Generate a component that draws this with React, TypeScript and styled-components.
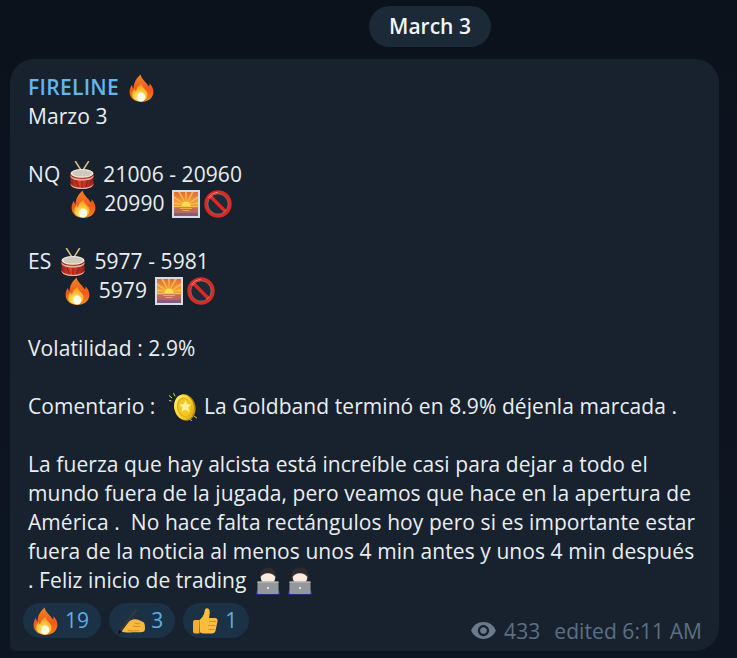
import React from "react";
import styled, { createGlobalStyle } from "styled-components";

const Global = createGlobalStyle`
  html, body { margin: 0; padding: 0; background: #0c131e; }
  body { width: 737px; height: 658px; overflow: hidden; font-family: "Open Sans", "Noto Sans", sans-serif; }
`;

const Page = styled.div`
  width: 737px;
  height: 658px;
  padding-top: 6px;
  box-sizing: border-box;
  background: linear-gradient(180deg, #0c121c 0%, #0d1522 100%);
  display: flex;
  flex-direction: column;
`;

const DatePill = styled.div`
  align-self: flex-start;
  margin-left: 369px;
  height: 41px;
  width: 122px;
  padding-bottom: 1px;
  box-sizing: border-box;
  border-radius: 21px;
  background: #1c2936;
  color: #f2f5f8;
  font-size: 21px;
  font-weight: 600;
  display: flex;
  align-items: center;
  justify-content: center;
`;

const Bubble = styled.div`
  align-self: flex-start;
  margin: 12px 0 0 10px;
  width: 709px;
  box-sizing: border-box;
  padding: 14px 17px 13px 18px;
  background: #18222e;
  border-radius: 24px 24px 24px 6px;
  color: #e9eef3;
  font-size: 21px;
  line-height: 29px;
  letter-spacing: 0.07px;
`;

const Message = styled.div`
  white-space: pre-wrap;
  padding-right: 2px;
`;

const Sender = styled.span`
  color: #62b6ee;
  font-weight: 600;
  letter-spacing: 0.3px;
`;

const Line = styled.div`
  min-height: 29px;
`;

const Glyph = styled.svg`
  display: inline-block;
  width: 28px;
  height: 28px;
  margin: 0 2px;
  vertical-align: -7px;
`;

const Footer = styled.div`
  display: flex;
  justify-content: space-between;
  align-items: flex-end;
  margin-top: 8px;
`;

const Reactions = styled.div`
  display: flex;
  gap: 8px;
  margin-left: -5px;
`;

const Reaction = styled.div`
  height: 35px;
  box-sizing: border-box;
  padding: 0 12px 0 8px;
  border-radius: 18px;
  background: #1b3145;
  color: #5eaee8;
  display: flex;
  align-items: center;
  gap: 6px;
  font-size: 21px;
  line-height: 35px;
  svg { width: 28px; height: 28px; display: block; }
`;

const Meta = styled.div`
  display: flex;
  align-items: center;
  color: #5d6f82;
  font-size: 21px;
  line-height: 26px;
  margin-bottom: -6px;
`;

const EyeIcon = styled.svg`
  width: 27px;
  height: 27px;
  margin-right: 7px;
  fill: #6b7b8c;
`;

const Edited = styled.span`
  margin-left: 14px;
`;

const Fire = () => (
  <>
    <defs>
      <linearGradient id="fireOuter" x1="0" y1="0" x2="0" y2="1">
        <stop offset="0" stopColor="#f4861f" />
        <stop offset="0.55" stopColor="#ee5a1d" />
        <stop offset="1" stopColor="#f08a1d" />
      </linearGradient>
      <radialGradient id="fireInner" cx="0.5" cy="0.8" r="0.7">
        <stop offset="0" stopColor="#fff8d8" />
        <stop offset="0.35" stopColor="#ffe05a" />
        <stop offset="1" stopColor="#f99a1c" />
      </radialGradient>
    </defs>
    <path d="M13.500.5C14.500 5 19 8 22 12.500c.6-1 .8-2 .6-3.200C25.500 12.500 27 16 26.300 19.600 25.300 24.800 20.500 28 14.500 28 8 28 3 24.500 2.600 18.600 2.400 15.800 3.400 13 5 10.800c.1 1.600.6 2.800 1.600 3.600C6.500 9 9.500 4 13.500.5Z" fill="url(#fireOuter)" />
    <path d="M14.500 10c.4 3 3.400 4.600 5.200 7.600 1.900 3.300.4 8.900-5.200 9.700-5.300.3-9-2.300-9.300-6.300-.2-2.400 1-4.500 2.600-5.900.1 1.200.5 2.100 1.300 2.700C9 14.500 11.500 11.800 14.500 10Z" fill="url(#fireInner)" />
    <ellipse cx="14.200" cy="23" rx="4" ry="4.500" fill="#fffbe6" />
  </>
);

const Drum = () => (
  <>
    <defs>
      <linearGradient id="drumBody" x1="0" y1="0" x2="1" y2="0">
        <stop offset="0" stopColor="#9c2116" />
        <stop offset="0.4" stopColor="#d9402d" />
        <stop offset="1" stopColor="#98201a" />
      </linearGradient>
    </defs>
    <path d="M7.500.5l7 11M20.500.5L13.500 11.500" stroke="#dcbb80" strokeWidth="1.500" strokeLinecap="round" />
    <path d="M2.500 12v11C2.500 26 8 28 14 28s11.500-2 11.500-5V12Z" fill="url(#drumBody)" />
    <path d="M2.500 22C2.500 25 8 26.800 14 26.800s11.500-1.800 11.500-4.800v1C25.500 26 20 28 14 28S2.500 26 2.500 23Z" fill="#e6b4a0" />
    <path d="M2.500 13.500C2.500 16.500 8 18 14 18s11.500-1.500 11.500-4.500v1.800C25.500 18 20 19.600 14 19.600S2.500 18 2.500 15.300Z" fill="#e6b4a0" />
    <ellipse cx="14" cy="12.300" rx="11.500" ry="4.400" fill="#f0ebe3" />
    <ellipse cx="14" cy="12.300" rx="9.800" ry="3.300" fill="#cfc8bc" />
    <path d="M8 19.500l2.500 6.500M14 20v7M20 19.500l-2.500 6.500" stroke="#7d150e" strokeWidth=".8" />
  </>
);

const Sunrise = () => (
  <>
    <defs>
      <linearGradient id="sunSky" x1="0" y1="0" x2="0" y2="1">
        <stop offset="0" stopColor="#df6a3e" />
        <stop offset="0.5" stopColor="#f9a834" />
        <stop offset="0.62" stopColor="#e98545" />
        <stop offset="1" stopColor="#7b5a8c" />
      </linearGradient>
    </defs>
    <rect width="28" height="28" fill="#d7dde3" />
    <rect x="2" y="2" width="24" height="24" fill="url(#sunSky)" />
    <path d="M14 15L6 2h2.500L14 14.500 13 2h2l-1 12.500L19.500 2H22ZM14 15L2 6v2.500L14 15 2 12.500V14ZM14 15 26 6v2.500L14 15l12-2.500V14Z" fill="#fbd24e" opacity=".7" />
    <path d="M9.500 16a4.500 4.500 0 0 1 9 0Z" fill="#ffe14e" />
    <rect x="2" y="16" width="24" height="10" fill="#b76a5c" opacity=".75" />
    <rect x="2" y="16" width="24" height="1.200" fill="#f9c24a" />
    <path d="M8 18.500h12M10.500 20.500h7" stroke="#f2a94d" strokeWidth="1" />
    <rect x="2" y="23" width="24" height="3" fill="#6d5590" opacity=".6" />
  </>
);

const NoEntry = () => (
  <>
    <circle cx="14" cy="14" r="12" fill="#1e2a36" stroke="#d92a24" strokeWidth="3.400" />
    <path d="M5.800 5.800l16.400 16.400" stroke="#d92a24" strokeWidth="3.400" />
    <circle cx="14" cy="14" r="10.100" fill="none" stroke="#e8e4e2" strokeWidth=".7" opacity=".45" />
    <path d="M4.500 8A11.500 11.500 0 0 1 14 2.500" stroke="#f57f72" strokeWidth="1" fill="none" />
  </>
);

const Coin = () => (
  <>
    <defs>
      <linearGradient id="coinFace" x1="0" y1="0" x2="1" y2="1">
        <stop offset="0" stopColor="#fff27e" />
        <stop offset="0.6" stopColor="#f6d024" />
        <stop offset="1" stopColor="#c99a12" />
      </linearGradient>
    </defs>
    <path d="M0 2.500l3 2.400M4.500.2l1.500 3M-.5 7.500l3 .5M25 23l3 2.200M21 25.500l1.500 2.500" stroke="#d6d65a" strokeWidth="1" />
    <ellipse cx="16" cy="14.500" rx="10.500" ry="13.300" transform="rotate(-12 16 14.500)" fill="#b9860e" />
    <ellipse cx="15" cy="14.300" rx="9.800" ry="12.800" transform="rotate(-12 15 14.300)" fill="url(#coinFace)" />
    <ellipse cx="15.300" cy="14.300" rx="7.300" ry="9.800" transform="rotate(-12 15.300 14.300)" fill="#d9a912" />
    <ellipse cx="15.600" cy="14.500" rx="6.500" ry="9" transform="rotate(-12 15.600 14.500)" fill="#f2c91e" />
    <path d="M16.500 7l1.700 4.300 4.200.2-3.300 3 1.200 4.500-3.900-2.500-4.100 2.400 1.300-4.500-3.300-3 4.500-.2Z" fill="#fff3a0" />
  </>
);

const Coder = ({ long }: { long?: boolean }) => (
  <>
    <path d="M2.500 27.500c-.5-1.500-.2-3 1-4.500h21c1.200 1.500 1.500 3 1 4.500Z" fill="#2f3fc4" />
    <path d={long ? "M5.500 14C4.500 5 8.500.5 14 .5S23.500 5 22.500 14l.5 3H5Z" : "M6.300 11C5.800 4.500 9 .5 14 .5S22.200 4.500 21.700 11Z"} fill="#302b2c" />
    <ellipse cx="14" cy="10.500" rx="7.300" ry="7.500" fill="#fbeadd" />
    <path d="M6.700 10C8.500 7 11 6 14 6.200c2.500.2 5.500.6 7.300 3.800.4-4.800-2.600-7.600-7.300-7.600S6.300 5.200 6.700 10Z" fill="#302b2c" />
    <rect x="3.500" y="14.500" width="21" height="12.500" rx=".8" fill="#94979c" />
    <rect x="3.500" y="14.500" width="21" height="1.200" fill="#b5b8bc" />
    <circle cx="14" cy="21" r="1.100" fill="#f2f4f6" />
  </>
);

const Hand = () => (
  <>
    <path d="M5 24c1-4 3.500-8 7-10l4-1.500c2.200-.6 4.300-.1 6.300.8l4 1.800c1.600.8 2.200 6.400 1.200 8.800-1 1.300-5.500 1.300-8.500 1.300s-10.500.8-14-.5Z" fill="#f7b93e" />
    <path d="M11 23.500c3.500.8 7.500.5 11 0M16 19c2.200.8 5.200.8 7.400.2M17.500 15.700c1.500 1 3.500 1.300 5.500.9" stroke="#c9852a" strokeWidth=".9" fill="none" />
    <path d="M18.500 1.500l2.400 1.400L4.500 24.500l-2.300-1.600Z" fill="#33363b" />
    <path d="M2.200 22.900l2.300 1.600L1 27.500Z" fill="#0d0d0d" />
    <path d="M7.500 22c1.800-1.200 3-2.800 4.500-4.500 1.500 2.500.2 5.500-2 6.800Z" fill="#f7b93e" />
  </>
);

const Thumb = () => (
  <>
    <path d="M4 13h4.500v13.500H4c-1.200 0-2-1-2-2.300v-9c0-1.200.8-2.200 2-2.200Z" fill="#f4ad35" />
    <path d="M8.500 13c2-1.500 4.500-4.500 5-8 .2-2 .6-3.800 2.500-3.800 2.400 0 3 3 2.700 5.500l-.7 4.300h5.700c2.200 0 3.300 1.600 2.800 3.400l-2 9.300c-.4 1.800-1.600 2.800-3.500 2.800h-9c-1.200 0-2-.7-3-1.200Z" fill="#f9bd3f" />
    <path d="M18 14.500h7M17.500 18.500h7M17.500 22.500h6" stroke="#d88f2a" strokeWidth="1" fill="none" />
  </>
);

const emojis = {
  fire: <Fire />,
  drum: <Drum />,
  sunrise: <Sunrise />,
  noEntry: <NoEntry />,
  coin: <Coin />,
  coder: <Coder />,
  coderLong: <Coder long />,
  hand: <Hand />,
  thumb: <Thumb />,
};

type EmojiName = keyof typeof emojis;

const Emoji = ({ name }: { name: EmojiName }) => <Glyph viewBox="0 0 28 28">{emojis[name]}</Glyph>;
const ReactionEmoji = ({ name }: { name: EmojiName }) => <svg viewBox="0 0 28 28">{emojis[name]}</svg>;

const reactions: { emoji: EmojiName; count: number }[] = [
  { emoji: "fire", count: 19 },
  { emoji: "hand", count: 3 },
  { emoji: "thumb", count: 1 },
];

export default function App() {
  return (
    <>
      <Global />
      <Page>
        <DatePill>March 3</DatePill>
        <Bubble>
          <Message>
            <Line>
              <Sender>FIRELINE</Sender> <Emoji name="fire" />
            </Line>
            <Line>Marzo 3</Line>
            <Line />
            <Line>
              NQ <Emoji name="drum" /> 21006 - 20960
            </Line>
            <Line>
              {"       "}
              <Emoji name="fire" /> 20990 <Emoji name="sunrise" />
              <Emoji name="noEntry" />
            </Line>
            <Line />
            <Line>
              ES <Emoji name="drum" /> 5977 - 5981
            </Line>
            <Line>
              {"      "}
              <Emoji name="fire" /> 5979 <Emoji name="sunrise" />
              <Emoji name="noEntry" />
            </Line>
            <Line />
            <Line>Volatilidad : 2.9%</Line>
            <Line />
            <Line>
              {"Comentario :  "}
              <Emoji name="coin" /> La Goldband terminó en 8.9% déjenla marcada .
            </Line>
            <Line />
            <Line>
              {"La fuerza que hay alcista está increíble casi para dejar a todo el mundo fuera de la jugada, pero veamos que hace en la apertura de América .  No hace falta rectángulos hoy pero si es importante estar fuera de la noticia al menos unos 4 min antes y unos 4 min después . Feliz inicio de trading "}
              <Emoji name="coder" />
              <Emoji name="coderLong" />
            </Line>
          </Message>
          <Footer>
            <Reactions>
              {reactions.map((r) => (
                <Reaction key={r.emoji}>
                  <ReactionEmoji name={r.emoji} />
                  {r.count}
                </Reaction>
              ))}
            </Reactions>
            <Meta>
              <EyeIcon viewBox="0 0 24 24">
                <path d="M12 4.500C7 4.500 2.730 7.610 1 12c1.730 4.390 6 7.500 11 7.500s9.270-3.110 11-7.500c-1.730-4.390-6-7.500-11-7.500zM12 17c-2.760 0-5-2.240-5-5s2.240-5 5-5 5 2.240 5 5-2.240 5-5 5zm0-8c-1.660 0-3 1.340-3 3s1.340 3 3 3 3-1.340 3-3-1.340-3-3-3z" />
              </EyeIcon>
              433
              <Edited>edited 6:11 AM</Edited>
            </Meta>
          </Footer>
        </Bubble>
      </Page>
    </>
  );
}
